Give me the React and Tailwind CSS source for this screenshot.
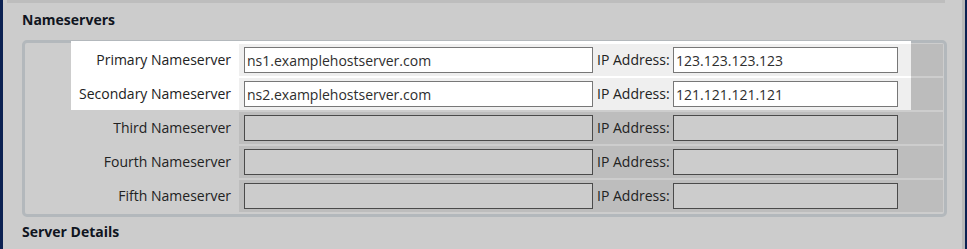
import React from "react";

function Input({ value, active, w }) {
  return (
    <div
      className={
        "h-[26px] shrink-0 flex items-center pl-[2px] text-[14px] text-[#2e2e2e] " +
        w +
        (active
          ? " bg-white border border-[#777777]"
          : " bg-[#cccccc] border border-[#4a4a4a]")
      }
    >
      {value}
    </div>
  );
}

function Cells({ ns, ip, active, bg }) {
  return (
    <div className={"flex-1 flex items-center pl-[5px] " + bg}>
      <Input value={ns} active={active} w="w-[349px]" />
      <div className="w-[80px] shrink-0 pl-[4px] text-[14px] text-[#222222] leading-[20px]">
        IP Address:
      </div>
      <Input value={ip} active={active} w="w-[225px]" />
    </div>
  );
}

function Label({ text, bg }) {
  return (
    <div
      className={
        "w-[168px] shrink-0 flex items-center justify-end pr-[8px] text-[14px] leading-[20px] text-[#222222] " +
        bg
      }
    >
      {text}
    </div>
  );
}

export default function App() {
  const top = [
    { label: "Primary Nameserver", ns: "ns1.examplehostserver.com", ip: "123.123.123.123" },
    { label: "Secondary Nameserver", ns: "ns2.examplehostserver.com", ip: "121.121.121.121" },
  ];
  const rest = ["Third Nameserver", "Fourth Nameserver", "Fifth Nameserver"];

  return (
    <div className="w-[967px] h-[249px] overflow-hidden flex font-['Open_Sans',sans-serif] bg-[#cccccc]">
      <div className="w-[3px] shrink-0 bg-[#0b2152]" />
      <div className="flex-1 flex flex-col">
        <div className="h-[3px] ml-[4px] mr-[17px] bg-[#bdbdbd]" />
        <div className="pl-[19px] pr-[15px]">
          <div className="mt-[7px] text-[14px] leading-[20px] font-bold text-[#10151f]">
            Nameservers
          </div>
          <div className="mt-[10px] w-[925px] border-[3px] border-[#b3b8bc] rounded-[5px] bg-[#cdcdcd] pt-[1px] pb-[2px] pr-[1px] flex flex-col gap-[2px]">
            <div className="flex h-[66px]">
              <div className="w-[46px] shrink-0" />
              <div className="w-[840px] shrink-0 relative z-10 -mt-[3px] pt-[3px] bg-white flex flex-col gap-[2px]">
                {top.map((r) => (
                  <div key={r.label} className="flex h-[32px]">
                    <Label text={r.label} bg="bg-white" />
                    <Cells ns={r.ns} ip={r.ip} active bg="bg-[#efefef]" />
                  </div>
                ))}
              </div>
              <div className="flex-1 flex flex-col gap-[2px]">
                <div className="h-[32px] bg-[#bcbcbc]" />
                <div className="h-[32px] bg-[#bcbcbc]" />
              </div>
            </div>
            {rest.map((l) => (
              <div key={l} className="flex h-[32px]">
                <div className="w-[46px] shrink-0" />
                <Label text={l} bg="" />
                <Cells ns="" ip="" active={false} bg="bg-[#bdbdbd]" />
              </div>
            ))}
          </div>
          <div className="mt-[5px] text-[14px] leading-[20px] font-bold text-[#10151f]">
            Server Details
          </div>
        </div>
      </div>
      <div className="w-[3px] shrink-0 bg-[#b8b8b8]" />
      <div className="w-[2px] shrink-0 bg-[#0b2152]" />
    </div>
  );
}
